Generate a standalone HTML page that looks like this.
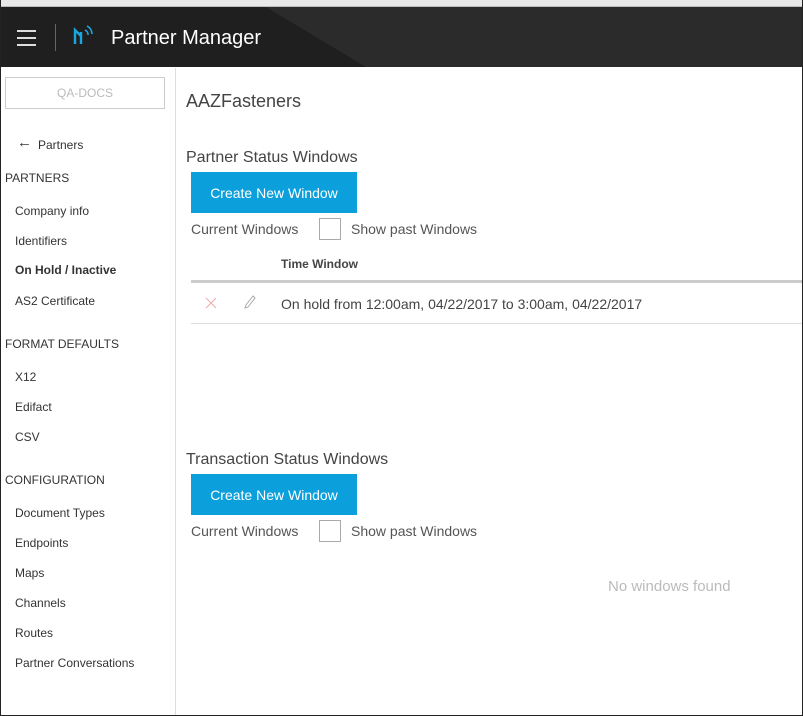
<!DOCTYPE html>
<html><head><style>
*{margin:0;padding:0;box-sizing:border-box}
body{width:803px;height:716px;overflow:hidden;background:#fff;font-family:"Liberation Sans",sans-serif;position:relative;color:#333}
.frame{position:absolute;left:0;top:0;width:803px;height:716px;border:1px solid #222;border-top:none}
.top{position:absolute;left:0;top:0;width:803px;height:7px;background:#e8e8e8;border-bottom:1px solid #bbb}
.hdr{position:absolute;left:1px;top:7px;width:801px;height:60px;background:#1f1f1f;overflow:hidden}
.hdr .tri{position:absolute;left:0;top:0;width:801px;height:60px;background:#2b2b2b;clip-path:polygon(265px 0,801px 0,801px 60px,365px 60px)}
.ham{position:absolute;left:16px;top:23px;width:19px}
.ham i{display:block;height:2px;background:#ddd;margin-bottom:5px}
.sep{position:absolute;left:54px;top:17px;width:1px;height:27px;background:#666}
.title{position:absolute;left:110px;top:20px;color:#fff;font-size:20px}
.side{position:absolute;left:1px;top:68px;width:175px;height:647px;border-right:1px solid #ddd}
.qa{position:absolute;left:4px;top:9px;width:160px;height:32px;border:1px solid #ccc;color:#bbb;font-size:12px;text-align:center;line-height:31px}
.s{position:absolute;font-size:12px;color:#333}
.h{position:absolute;left:4px;font-size:12px;color:#333}
.main{position:absolute;left:186px}
.btn{position:absolute;left:191px;width:166px;height:41px;background:#0ba0db;color:#fff;font-size:14px;text-align:center;line-height:42px}
.cw{position:absolute;left:191px;font-size:14px;color:#555}
.cb{position:absolute;left:319px;width:22px;height:22px;border:1px solid #aaa}
</style></head><body>
<div class="top"></div>
<div class="hdr"><div class="tri"></div>
<div class="ham"><i></i><i></i><i></i></div>
<div class="sep"></div>
<svg style="position:absolute;left:72px;top:17px" width="22" height="24" viewBox="0 0 22 24"><path d="M2 20V6l6 6v8M8 20V8" stroke="#1aa6e0" stroke-width="2.4" fill="none"/><path d="M12 6a5 5 0 0 1 3 5M14 2a9 9 0 0 1 5 8" stroke="#1aa6e0" stroke-width="1.6" fill="none"/></svg>
<div class="title">Partner Manager</div>
</div>
<div class="side">
<div class="qa">QA-DOCS</div>
<div class="s" style="left:16px;top:66px;font-size:15px">←</div>
<div class="s" style="left:37px;top:70px">Partners</div>
<div class="h" style="top:103px">PARTNERS</div>
<div class="s" style="left:14px;top:136px">Company info</div>
<div class="s" style="left:14px;top:166px">Identifiers</div>
<div class="s" style="left:14px;top:195px;font-weight:bold">On Hold / Inactive</div>
<div class="s" style="left:14px;top:226px">AS2 Certificate</div>
<div class="h" style="top:269px">FORMAT DEFAULTS</div>
<div class="s" style="left:14px;top:302px">X12</div>
<div class="s" style="left:14px;top:332px">Edifact</div>
<div class="s" style="left:14px;top:362px">CSV</div>
<div class="h" style="top:405px">CONFIGURATION</div>
<div class="s" style="left:14px;top:438px">Document Types</div>
<div class="s" style="left:14px;top:468px">Endpoints</div>
<div class="s" style="left:14px;top:498px">Maps</div>
<div class="s" style="left:14px;top:528px">Channels</div>
<div class="s" style="left:14px;top:558px">Routes</div>
<div class="s" style="left:14px;top:588px">Partner Conversations</div>
</div>
<div class="main" style="top:91px;font-size:18px;color:#444">AAZFasteners</div>
<div class="main" style="top:149px;font-size:16px;color:#444">Partner Status Windows</div>
<div class="btn" style="top:172px">Create New Window</div>
<div class="cw" style="top:221px">Current Windows</div>
<div class="cb" style="top:218px"></div>
<div class="cw" style="top:221px;left:351px">Show past Windows</div>
<div style="position:absolute;left:281px;top:257px;font-size:12px;font-weight:bold;color:#444">Time Window</div>
<div style="position:absolute;left:191px;top:280px;width:611px;height:3px;background:#ccc"></div>
<svg style="position:absolute;left:205px;top:297px" width="12" height="12"><path d="M1 1L11 11M11 1L1 11" stroke="#f0a8a8" stroke-width="1"/></svg>
<svg style="position:absolute;left:244px;top:295px" width="12" height="14"><path d="M9 1l2 2-7 9-3 1 1-3z" stroke="#aaa" fill="none"/></svg>
<div style="position:absolute;left:281px;top:296px;font-size:14px;color:#444">On hold from 12:00am, 04/22/2017 to 3:00am, 04/22/2017</div>
<div style="position:absolute;left:191px;top:323px;width:611px;height:1px;background:#ddd"></div>
<div class="main" style="top:451px;font-size:16px;color:#444">Transaction Status Windows</div>
<div class="btn" style="top:474px">Create New Window</div>
<div class="cw" style="top:523px">Current Windows</div>
<div class="cb" style="top:520px"></div>
<div class="cw" style="top:523px;left:351px">Show past Windows</div>
<div style="position:absolute;left:608px;top:578px;font-size:15px;color:#bbb">No windows found</div>
<div class="frame"></div>
</body></html>
